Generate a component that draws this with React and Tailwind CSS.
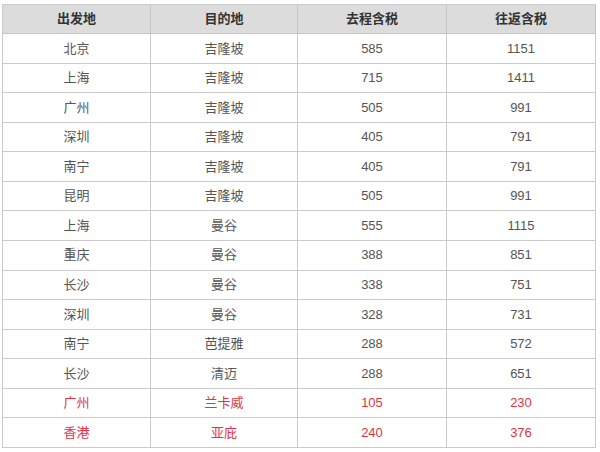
import React from "react";

const rows = [
  ["北京", "吉隆坡", "585", "1151"],
  ["上海", "吉隆坡", "715", "1411"],
  ["广州", "吉隆坡", "505", "991"],
  ["深圳", "吉隆坡", "405", "791"],
  ["南宁", "吉隆坡", "405", "791"],
  ["昆明", "吉隆坡", "505", "991"],
  ["上海", "曼谷", "555", "1115"],
  ["重庆", "曼谷", "388", "851"],
  ["长沙", "曼谷", "338", "751"],
  ["深圳", "曼谷", "328", "731"],
  ["南宁", "芭提雅", "288", "572"],
  ["长沙", "清迈", "288", "651"],
  ["广州", "兰卡威", "105", "230", true],
  ["香港", "亚庇", "240", "376", true],
];

const headers = ["出发地", "目的地", "去程含税", "往返含税"];

const font = { fontFamily: '"Liberation Sans", "Noto Sans CJK SC", sans-serif' };

export default function App() {
  return (
    <div className="w-[600px] h-[452px] bg-white pl-[2px] pt-[4px]" style={font}>
      <div className="grid grid-cols-[148px_147px_149px_149px] border-l border-t border-[#cbcbcb] w-max">
        {headers.map((h) => (
          <div
            key={h}
            className="h-[29px] flex items-center justify-center bg-[#dcdcdc] border-r border-b border-[#c4c4c4] text-[13px] font-bold text-[#333]"
          >
            {h}
          </div>
        ))}
        {rows.map((r, i) =>
          r.slice(0, 4).map((c, j) => (
            <div
              key={i + "-" + j}
              className={`h-[29.57px] flex items-center justify-center border-r border-b border-[#cbcbcb] text-[13px] ${
                r[4] ? "text-[#e2323f]" : "text-[#555]"
              }`}
            >
              {c}
            </div>
          ))
        )}
      </div>
    </div>
  );
}
